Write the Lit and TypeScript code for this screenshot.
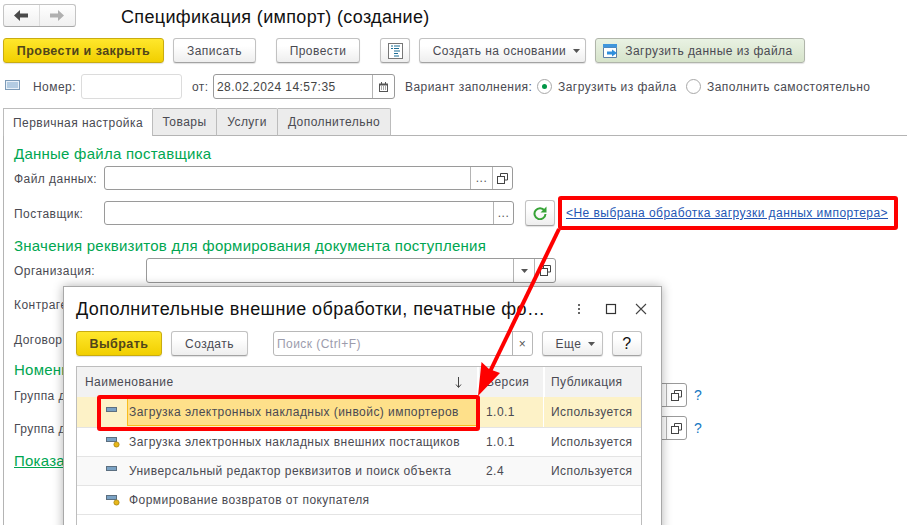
import { LitElement, html, css, svg } from 'lit';
import { customElement } from 'lit/decorators.js';

const copyIcon = html`<svg width="11" height="11" viewBox="0 0 11 11" fill="none" stroke="#444" stroke-width="1">
  <path d="M3.500 3.500V.5h7v6.500H7.500"/><rect x=".5" y="3.500" width="7" height="7" fill="none"/>
</svg>`;

const caret = html`<svg class="caret" width="7" height="4" viewBox="0 0 7 4"><path d="M0 0h7L3.500 4z" fill="#555"/></svg>`;

const rowIcon = (dot: boolean) => html`<svg class="row-icon" width="18" height="14" viewBox="0 0 18 14">
  <rect x=".5" y="2.500" width="10" height="4" fill="#7aa2c4" stroke="#5c6f80"/>
  ${dot ? svg`<circle cx="10.500" cy="9.500" r="2.600" fill="#e8b71a" stroke="#a68512" stroke-width=".8"/>` : ''}
</svg>`;

const rows = [
  { name: 'Загрузка электронных накладных (инвойс) импортеров', ver: '1.0.1', dot: false },
  { name: 'Загрузка электронных накладных внешних постащиков', ver: '1.0.1', dot: true },
  { name: 'Универсальный редактор реквизитов и поиск объекта', ver: '2.4', dot: false },
  { name: 'Формирование возвратов от покупателя', ver: '', dot: true },
];

@customElement('app-root')
export class AppRoot extends LitElement {
  static styles = css`
    :host {
      display: block;
      width: 907px;
      height: 525px;
      overflow: hidden;
      position: relative;
      background: #fff;
      color: #4a4a52;
      font-family: 'Liberation Sans', Arial, sans-serif;
      font-size: 12px;
      letter-spacing: 0.45px;
    }

    .head { display: flex; align-items: center; height: 23px; margin: 4px 0 0 3px; }
    .nav {
      display: flex;
      width: 73px;
      height: 23px;
      box-sizing: border-box;
      border: 1px solid #c4c4c4;
      border-bottom-color: #a8a8a8;
      border-radius: 3px;
      background: linear-gradient(#fff, #f0f0f0);
    }
    .nav span { flex: 1; display: flex; align-items: center; justify-content: center; }
    .nav span + span { border-left: 1px solid #dcdcdc; }
    .title { margin: 2px 0 0 45px; font-size: 18px; color: #111; letter-spacing: 0.34px; line-height: 26px; }

    .toolbar { display: flex; align-items: stretch; height: 25px; margin: 11px 0 0 3px; }
    .btn {
      display: flex;
      align-items: center;
      justify-content: center;
      box-sizing: border-box;
      height: 25px;
      border: 1px solid #c2c2c2;
      border-bottom-color: #a3a3a3;
      border-radius: 3px;
      background: linear-gradient(#fff 30%, #eeeeee);
      box-shadow: 0 1px 1px rgba(0, 0, 0, 0.12);
      white-space: nowrap;
    }
    .btn.primary {
      background: linear-gradient(#ffe72c, #f1cf00);
      border-color: #c9ac10;
      color: #50451a;
      font-weight: 700;
      font-size: 12.5px;
    }
    .btn.load { background: linear-gradient(#e9f2e3, #d6e3ca); border-color: #b0b5aa; padding-right: 4px; }
    .w-save { width: 83px; margin-left: 9px; }
    .w-post { width: 84px; margin-left: 20px; }
    .w-list { width: 30px; margin-left: 20px; }
    .w-base { width: 167px; margin-left: 9px; padding-left: 8px; }
    .w-load { width: 210px; margin-left: 9px; }
    .w-close { width: 161px; }
    .caret { margin-left: 7px; flex: none; }
    .cell .caret { margin-left: 0; }
    .load svg { margin-right: 7px; }

    .meta { display: flex; align-items: center; height: 25px; margin-top: 11px; white-space: nowrap; }
    .meta-icon { margin: -3px 0 0 5px; flex: none; }
    .input {
      display: flex;
      box-sizing: border-box;
      height: 100%;
      border: 1px solid #9a9a9a;
      border-radius: 3px;
      background: #fff;
      flex: none;
    }
    .num { width: 101px; border-color: #dcdcdc; margin-left: 6px; }
    .num-label { margin-left: 13px; width: 42px; }
    .from { margin-left: 10px; width: 16px; }
    .date { width: 182px; margin-left: 5px; align-items: center; padding-left: 3px; color: #444; }
    .date b { font-weight: 400; flex: 1; }
    .cell {
      display: flex;
      align-items: center;
      justify-content: center;
      align-self: stretch;
      box-sizing: border-box;
      border-left: 1px solid #b4b4b4;
      color: #555;
      flex: none;
    }
    .c20 { width: 20px; }
    .c21 { width: 21px; }
    .c22 { width: 22px; }
    .variant { margin-left: 10px; width: 125px; }
    .radio {
      box-sizing: border-box;
      width: 15px;
      height: 15px;
      border: 1px solid #a8a8a8;
      border-radius: 50%;
      display: flex;
      align-items: center;
      justify-content: center;
      margin: 0 6px 0 7px;
      flex: none;
    }
    .radio i { width: 5px; height: 5px; border-radius: 50%; background: #009646; }
    .radio.second { margin-left: 11px; }
    .opt { width: 117px; }

    .tabs { display: flex; height: 28px; margin: 9px 0 0 3px; }
    .tab {
      display: flex;
      align-items: center;
      justify-content: center;
      box-sizing: border-box;
      border: 1px solid #bcbcbc;
      border-left: 0;
      border-radius: 0 2px 0 0;
      background: #ececec;
      border-bottom-color: #b4b4b4;
    }
    .tab.active { width: 150px; background: #fff; border-left: 1px solid #bcbcbc; border-bottom: 0; }
    .t2 { width: 64px; }
    .t3 { width: 61px; }
    .t4 { width: 113px; }
    .tab-rest { flex: 1; border-bottom: 1px solid #b4b4b4; }

    .panel {
      display: flex;
      flex-direction: column;
      height: 389px;
      margin-left: 3px;
      padding: 8px 0 0 10px;
      box-sizing: border-box;
      border-left: 1px solid #b4b4b4;
    }
    .heading { height: 18px; line-height: 20px; font-size: 15px; color: #00a651; letter-spacing: 0.25px; white-space: nowrap; }
    .row { display: flex; align-items: center; height: 24px; white-space: nowrap; }
    .row.tall { height: 25px; }
    .label { flex: none; width: 90px; padding-top: 1px; }
    .label.wide { width: 132px; }
    .m4 { margin-top: 4px; }
    .m5 { margin-top: 5px; }
    .m9 { margin-top: 9px; }
    .m11 { margin-top: 11px; }
    .f1 { width: 409px; }
    .f2 { width: 410px; }
    .f3 { width: 410px; }
    .f4 { width: 541px; }
    .grow { flex: 1; }
    .refresh { width: 30px; height: 26px; margin-left: 11px; flex: none; }
    .link { margin-left: 11px; color: #2456b4; text-decoration: underline; }
    .help { margin-left: 7px; color: #1678c2; font-size: 14px; }
    .show { margin-top: 11px; height: 18px; line-height: 20px; font-size: 15px; color: #00a651; text-decoration: underline; letter-spacing: 0.25px; }

    .modal {
      position: absolute;
      left: 63px;
      top: 286px;
      width: 599px;
      height: 260px;
      box-sizing: border-box;
      border: 1px solid #a8a8a8;
      background: #fff;
      box-shadow: 0 0 10px rgba(0, 0, 0, 0.3);
      padding: 0 19px 0 12px;
    }
    .m-head { display: flex; align-items: center; height: 44px; }
    .m-title { flex: 1; font-size: 18px; color: #111; letter-spacing: 0.42px; white-space: nowrap; }
    .m-icons { display: flex; align-items: center; gap: 18px; margin-right: -5px; }
    .m-dots { margin-right: 6px; }
    .m-tools { display: flex; height: 25px; }
    .m-select { width: 86px; }
    .m-create { width: 77px; margin-left: 9px; }
    .m-search { width: 260px; margin-left: 25px; align-items: center; padding-left: 3px; color: #9c9cac; border-color: #b8b8b8; }
    .m-search b { font-weight: 400; flex: 1; }
    .m-more { width: 61px; margin-left: 9px; padding-left: 6px; }
    .m-q { width: 30px; margin-left: 9px; font-size: 16px; color: #111; }
    .grid {
      margin-top: 10px;
      width: 566px;
      height: 200px;
      box-sizing: border-box;
      border: 1px solid #bdbdbd;
      border-bottom: 0;
    }
    .tr {
      display: grid;
      grid-template-columns: 400px 66px 1fr;
      height: 29px;
      box-sizing: border-box;
      border-bottom: 1px solid #e4e4e4;
      align-items: stretch;
    }
    .th { height: 30px; background: #f2f2f2; border-bottom: 0; }
    .th .ver, .th .pub { box-shadow: inset 2px 0 #fff; }
    .th .name { display: flex; align-items: center; justify-content: space-between; padding: 0 15px 0 8px; }
    .td { display: flex; align-items: center; white-space: nowrap; }
    .pub { padding-left: 8px; display: flex; align-items: center; }
    .ver { padding-left: 9px; display: flex; align-items: center; }
    .td .row-icon { margin: 0 3px 0 29px; flex: none; }
    .plain { padding-left: 2px; }
    .tr.alt { background: #f9f9f9; }
    .tr.sel { height: 31px; background: #fdf2c7; }
    .tr.sel .ver, .tr.sel .pub { box-shadow: inset 1px 0 #fff; }
    .sel-text {
      flex: 1;
      align-self: stretch;
      display: flex;
      align-items: center;
      margin: 1px 0;
      padding-left: 1px;
      background: #fee08a;
      border: 1px solid #f9bd1e;
    }

    .marks { position: absolute; inset: 0; pointer-events: none; }
  `;

  render() {
    return html`
      <div class="head">
        <div class="nav">
          <span><svg width="15" height="11" viewBox="0 0 15 11"><path d="M0 5.500 6 0v3.500h8v4H6V11z" fill="#4a4a4a"/></svg></span>
          <span><svg width="15" height="11" viewBox="0 0 15 11"><path d="M14 5.500 8 0v3.500H0v4h8V11z" fill="#b0b0b0"/></svg></span>
        </div>
        <div class="title">Спецификация (импорт) (создание)</div>
      </div>

      <div class="toolbar">
        <div class="btn primary w-close">Провести и закрыть</div>
        <div class="btn w-save">Записать</div>
        <div class="btn w-post">Провести</div>
        <div class="btn w-list">
          <svg width="15" height="16" viewBox="0 0 15 16">
            <rect x=".5" y=".5" width="14" height="15" fill="#fff" stroke="#777"/>
            <path d="M3 3h2M6 3h6M3 5.500h2M6 5.500h5M6 8h6M6 10.500h4M6 13h5" stroke="#1c6e96" stroke-width="1.200"/>
          </svg>
        </div>
        <div class="btn w-base">Создать на основании ${caret}</div>
        <div class="btn load w-load">
          <svg width="15" height="14" viewBox="0 0 15 14">
            <path d="M.5 3.500h13v10H.5z" fill="#fff" stroke="#5b7fa6"/>
            <rect x="0" y="0" width="14" height="3.500" fill="#3f96dc"/>
            <path d="M4 7.500h5V5.500l5 3.500-5 3.500v-2H4z" fill="#2f8fdc"/>
          </svg>
          Загрузить данные из файла
        </div>
      </div>

      <div class="meta">
        <svg class="meta-icon" width="15" height="10" viewBox="0 0 15 10">
          <rect x=".5" y=".5" width="14" height="9" fill="#e8f0f8" stroke="#7d9bb8"/>
          <path d="M2 3h11M2 5h11M2 7h11" stroke="#7ea7cc"/>
        </svg>
        <span class="num-label">Номер:</span>
        <div class="input num"></div>
        <span class="from">от:</span>
        <div class="input date">
          <b>28.02.2024 14:57:35</b>
          <span class="cell c22">
            <svg width="9" height="10" viewBox="0 0 9 10">
              <path d="M0 1.500h9V10H0z" fill="#555"/>
              <path d="M1 3.500h7V9H1z" fill="#fff"/>
              <path d="M2 0h1v2H2zM6 0h1v2H6z" fill="#555"/>
              <path d="M2 4.500h1v1H2zM4 4.500h1v1H4zM6 4.500h1v1H6zM2 6.500h1v1H2zM4 6.500h1v1H4zM6 6.500h1v1H6z" fill="#555"/>
            </svg>
          </span>
        </div>
        <span class="variant">Вариант заполнения:</span>
        <span class="radio"><i></i></span>
        <span class="opt">Загрузить из файла</span>
        <span class="radio second"></span>
        <span>Заполнить самостоятельно</span>
      </div>

      <div class="tabs">
        <div class="tab active">Первичная настройка</div>
        <div class="tab t2">Товары</div>
        <div class="tab t3">Услуги</div>
        <div class="tab t4">Дополнительно</div>
        <div class="tab-rest"></div>
      </div>

      <div class="panel">
        <div class="heading">Данные файла поставщика</div>
        <div class="row m4">
          <span class="label">Файл данных:</span>
          <div class="input f1"><span class="grow"></span><span class="cell c22">...</span><span class="cell c20">${copyIcon}</span></div>
        </div>
        <div class="row m11">
          <span class="label">Поставщик:</span>
          <div class="input f2"><span class="grow"></span><span class="cell c20">...</span></div>
          <div class="btn refresh">
            <svg width="14" height="14" viewBox="0 0 14 14" fill="none">
              <path d="M11.500 4.500A5.500 5.500 0 1 0 12.500 8" stroke="#36a336" stroke-width="2"/>
              <path d="M13.500 .5v6h-6z" fill="#36a336"/>
            </svg>
          </div>
          <span class="link">&lt;Не выбрана обработка загрузки данных импортера&gt;</span>
        </div>
        <div class="heading m11">Значения реквизитов для формирования документа поступления</div>
        <div class="row tall m4">
          <span class="label wide">Организация:</span>
          <div class="input f3"><span class="grow"></span><span class="cell c21">${caret}</span><span class="cell c21">${copyIcon}</span></div>
        </div>
        <div class="row m9"><span class="label">Контрагент:</span></div>
        <div class="row m11"><span class="label">Договор:</span></div>
        <div class="heading m9">Номенклатура</div>
        <div class="row m5">
          <span class="label wide">Группа доступа:</span>
          <div class="input f4"><span class="grow"></span><span class="cell c20">${copyIcon}</span></div>
          <span class="help">?</span>
        </div>
        <div class="row m9">
          <span class="label wide">Группа доступа:</span>
          <div class="input f4"><span class="grow"></span><span class="cell c20">${copyIcon}</span></div>
          <span class="help">?</span>
        </div>
        <div class="show">Показать</div>
      </div>

      <div class="modal">
        <div class="m-head">
          <div class="m-title">Дополнительные внешние обработки, печатные фо…</div>
          <div class="m-icons">
            <svg class="m-dots" width="4" height="12" viewBox="0 0 4 12"><path d="M1 1h2v2H1zM1 5h2v2H1zM1 9h2v2H1z" fill="#666"/></svg>
            <svg width="12" height="12" viewBox="0 0 12 12"><rect x="1.500" y="1.500" width="9" height="9" fill="none" stroke="#333" stroke-width="1.200"/></svg>
            <svg width="12" height="12" viewBox="0 0 12 12"><path d="M1 1l10 10M11 1 1 11" stroke="#444" stroke-width="1.100"/></svg>
          </div>
        </div>
        <div class="m-tools">
          <div class="btn primary m-select">Выбрать</div>
          <div class="btn m-create">Создать</div>
          <div class="input m-search"><b>Поиск (Ctrl+F)</b><span class="cell c20">×</span></div>
          <div class="btn m-more">Еще ${caret}</div>
          <div class="btn m-q">?</div>
        </div>
        <div class="grid">
          <div class="tr th">
            <div class="name"><span>Наименование</span>
              <svg width="7" height="11" viewBox="0 0 7 11"><path d="M3.500 0v10M1 7.500 3.500 10.500 6 7.500" fill="none" stroke="#444"/></svg>
            </div>
            <div class="ver">Версия</div>
            <div class="pub">Публикация</div>
          </div>
          ${rows.map((r, i) => html`
            <div class="tr ${i === 0 ? 'sel' : i === 2 ? 'alt' : ''}">
              <div class="td">
                ${rowIcon(r.dot)}
                ${i === 0 ? html`<span class="sel-text">${r.name}</span>` : html`<span class="plain">${r.name}</span>`}
              </div>
              <div class="ver">${r.ver}</div>
              <div class="pub">${r.ver ? 'Используется' : ''}</div>
            </div>
          `)}
        </div>
      </div>

      <svg class="marks" width="907" height="525" viewBox="0 0 907 525" fill="none">
        <rect x="560" y="198" width="336" height="30" rx="1" stroke="#fe0000" stroke-width="4"/>
        <rect x="99" y="397" width="379" height="32" rx="1" stroke="#fe0000" stroke-width="4"/>
        <path d="M559 229 483 386" stroke="#fe0000" stroke-width="4"/>
        <path d="M478 396 481.500 362 489 369 500 373z" fill="#fe0000"/>
      </svg>
    `;
  }
}

declare global {
  interface HTMLElementTagNameMap {
    'app-root': AppRoot;
  }
}
